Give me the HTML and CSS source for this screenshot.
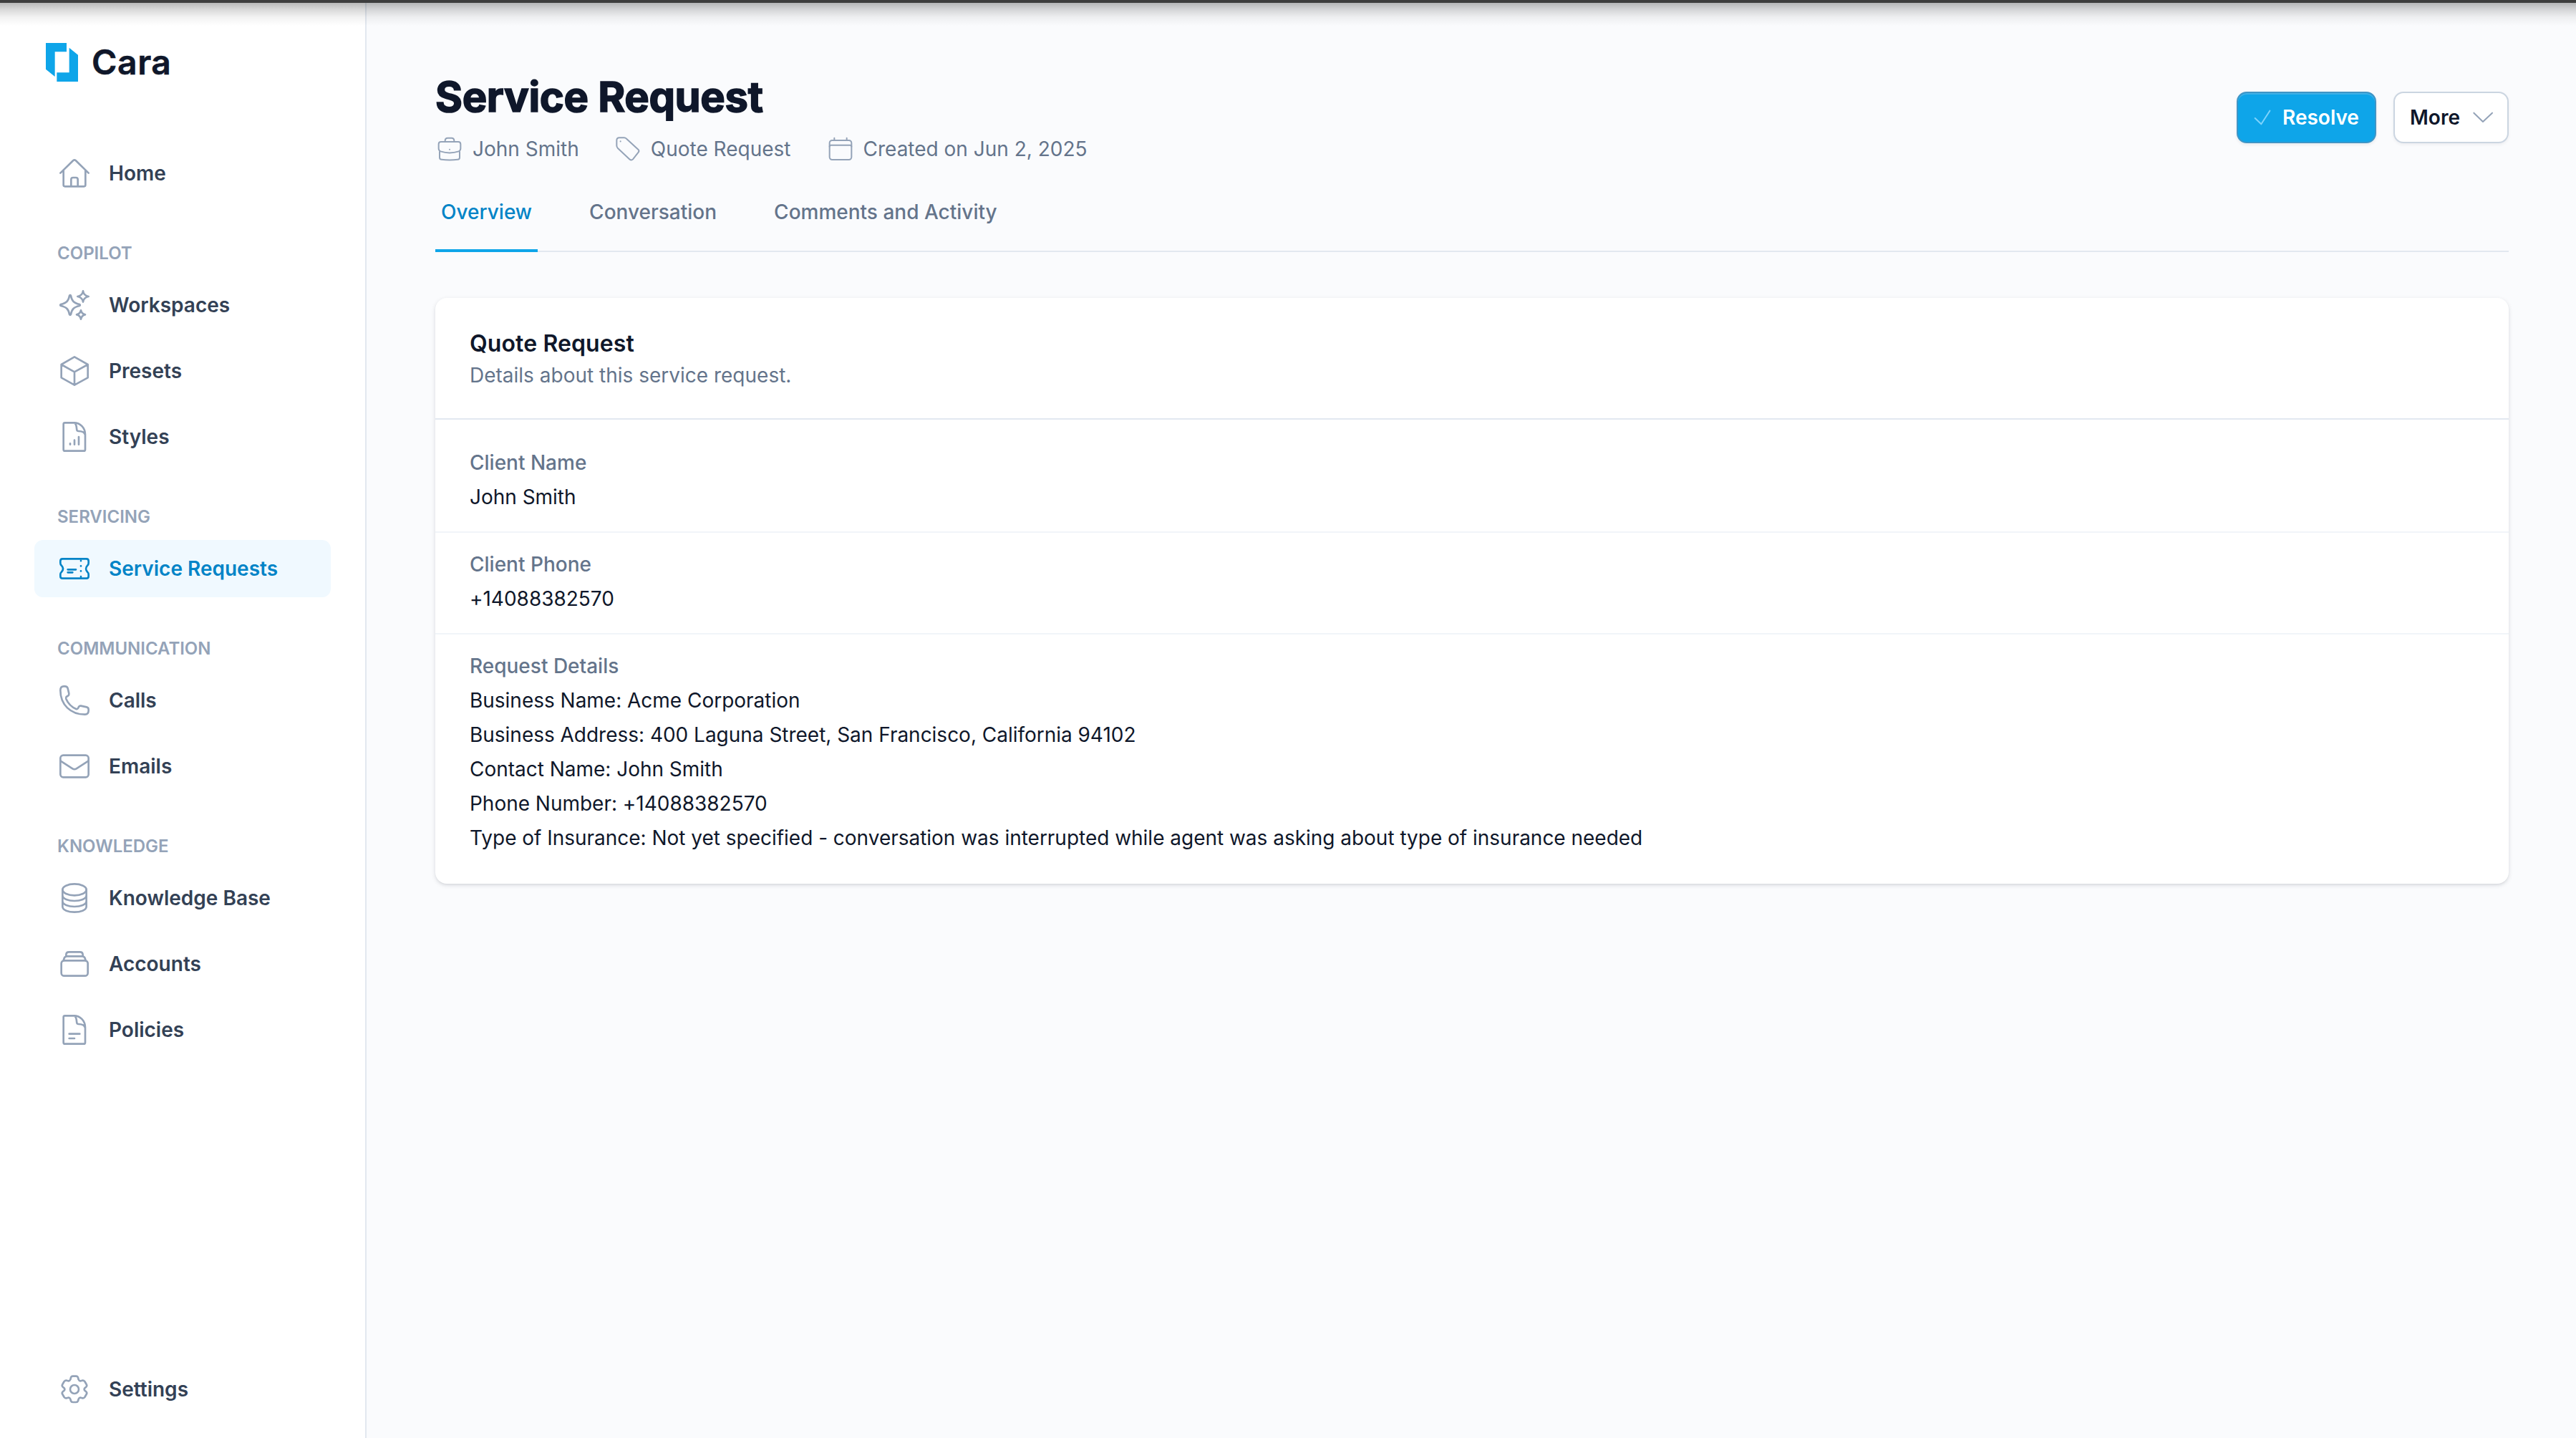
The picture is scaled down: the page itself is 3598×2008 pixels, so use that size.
FILE: index.html
```html
<!DOCTYPE html>
<html lang="en">
<head>
<meta charset="utf-8">
<title>Service Request</title>
<link rel="stylesheet" href="styles.css">
</head>
<body>
<div class="app">
  <div class="window-edge"></div>
  <aside class="sidebar">
    <div class="brand">
      <svg class="brand-mark" viewBox="0 0 135 162"><path d="M0 0H87V37H38V141L0 110Z"/><path d="M98 20L135 50V162H46V124H98Z"/></svg>
      <span class="brand-name">Cara</span>
    </div>
    <nav class="nav">
      <a class="nav-item"><svg class="icon" viewBox="0 0 144 144"><path d="M13 71L67 18Q72 14 77 18L131 71M26 60V121Q26 127 32 127H112Q118 127 118 121V60M58 126V98Q58 90 66 90H78Q86 90 86 98V126"/></svg><span>Home</span></a>

      <div class="nav-label">COPILOT</div>
      <a class="nav-item"><svg class="icon" viewBox="0 0 144 144"><path d="M51 33Q54 28 57 33C61 55 69 63 93 69Q98 72 93 75C69 81 61 89 57 111Q54 116 51 111C47 89 39 81 15 75Q10 72 15 69C39 63 47 55 51 33ZM108 13C110 27 116 33 131 36C116 39 110 45 108 59C106 45 100 39 85 36C100 33 106 27 108 13ZM99 94C101 105 106 110 117 112C106 114 101 120 99 131C97 120 92 114 81 112C92 110 97 105 99 94Z"/></svg><span>Workspaces</span></a>
      <a class="nav-item"><svg class="icon" viewBox="0 0 144 144"><path d="M72 13L128 45V100L72 131L17 100V45ZM17 45L72 76L128 45M72 76V131"/></svg><span>Presets</span></a>
      <a class="nav-item"><svg class="icon" viewBox="0 0 144 144"><path d="M26 19Q26 13 32 13H70C97 13 117 35 117 62V125Q117 131 111 131H32Q26 131 26 125ZM72 13C82 20 80 34 82 43Q83 48 88 48C101 48 114 51 117 64M54 100V104M72 86V104M90 72V104"/></svg><span>Styles</span></a>

      <div class="nav-label">SERVICING</div>
      <a class="nav-item active"><svg class="icon" viewBox="0 0 144 144"><path d="M13 40Q13 31 22 31H122Q131 31 131 40V49Q131 55 127 58C118 67 118 78 127 87Q131 90 131 96V104Q131 113 122 113H22Q13 113 13 104V96Q13 90 17 87C26 78 26 67 17 58Q13 55 13 49ZM44 76H78M44 88H64M99 39V39.5M99 61V61.5M99 82V82.5M99 105V105.5"/></svg><span>Service Requests</span></a>

      <div class="nav-label">COMMUNICATION</div>
      <a class="nav-item"><svg class="icon" viewBox="0 0 144 144"><path d="M13 30Q13 13 27 13H32Q42 13 44 22L49 43Q50 49 45 53L38 57Q35 61 37 66C44 82 60 100 79 108Q83 110 87 105L90 99Q93 94 99 95L123 100Q131 102 131 110V115Q131 131 116 131C56 131 13 90 13 30Z"/></svg><span>Calls</span></a>
      <a class="nav-item"><svg class="icon" viewBox="0 0 144 144"><rect x="13" y="26" width="118" height="92" rx="12"/><path d="M13 49L64 82Q72 87 80 82L131 49"/></svg><span>Emails</span></a>

      <div class="nav-label">KNOWLEDGE</div>
      <a class="nav-item"><svg class="icon" viewBox="0 0 144 144"><ellipse cx="72" cy="37" rx="50" ry="24"/><path d="M22 37V107C22 139 122 139 122 107V37M22 60C22 92 122 92 122 60M22 84C22 116 122 116 122 84"/></svg><span>Knowledge Base</span></a>
      <a class="nav-item"><svg class="icon" viewBox="0 0 144 144"><rect x="17" y="58" width="111" height="64" rx="12"/><path d="M26 58L29 48Q32 40 40 40H105Q113 40 116 48L119 58M37 40V34Q37 22 49 22H95Q107 22 107 34V40"/></svg><span>Accounts</span></a>
      <a class="nav-item"><svg class="icon" viewBox="0 0 144 144"><path d="M26 19Q26 13 32 13H70C97 13 117 35 117 62V125Q117 131 111 131H32Q26 131 26 125ZM72 13C82 20 80 34 82 43Q83 48 88 48C101 48 114 51 117 64M50 89H94M50 108H72"/></svg><span>Policies</span></a>

      <a class="nav-item settings"><svg class="icon" viewBox="0 0 144 144"><circle cx="72" cy="72" r="18"/><path d="M65 17H79Q85 17 87 23L89 31Q92 38 98 37L105 35Q111 34 115 39L122 51Q126 57 121 62L115 67Q111 72 115 77L121 82Q126 87 122 93L115 105Q111 110 105 109L98 107Q92 106 89 113L87 121Q85 126 79 126H65Q59 126 57 121L55 113Q52 106 46 107L39 109Q33 110 29 105L22 93Q18 87 23 82L29 77Q33 72 29 67L23 62Q18 57 22 51L29 39Q33 34 39 35L46 37Q52 38 55 31L57 23Q59 17 65 17Z"/></svg><span>Settings</span></a>
    </nav>
  </aside>

  <main class="main">
    <header class="page-header">
      <div class="heading">
        <h1 class="title">Service Request</h1>
        <div class="meta">
          <div class="meta-item"><svg class="meta-icon" viewBox="0 0 120 120"><path d="M14 40Q14 30 24 30H96Q106 30 106 40V58Q106 67 98 70C74 78 46 78 22 70Q14 67 14 58ZM18 72V96Q18 104 26 104C48 107 72 107 94 104Q102 104 102 96V72M41 29V26Q41 14 52 14H68Q79 14 79 26V29M60 62V62.5"/></svg><span>John Smith</span></div>
          <div class="meta-item"><svg class="meta-icon" viewBox="0 0 120 120"><path d="M13 24Q13 13 24 13H44Q50 13 54 17L103 62Q109 68 104 74L81 103Q75 109 68 104L17 56Q13 52 13 46ZM29 28V28.5"/></svg><span>Quote Request</span></div>
          <div class="meta-item"><svg class="meta-icon" viewBox="0 0 120 120"><rect x="14" y="24" width="92" height="81" rx="11"/><path d="M14 50Q14 44 20 44H100Q106 44 106 50M34 14V24M86 14V24"/></svg><span>Created on Jun 2, 2025</span></div>
        </div>
      </div>
      <div class="actions">
        <button class="btn btn-primary"><svg class="check" viewBox="0 0 72 72"><path d="M5 39L31 64L67 8"/></svg><span>Resolve</span></button>
        <button class="btn btn-secondary"><span>More</span><svg class="chevron" viewBox="0 0 96 96"><path d="M10 29L48 66L87 29"/></svg></button>
      </div>
    </header>

    <div class="tabs">
      <a class="tab current">Overview</a>
      <a class="tab">Conversation</a>
      <a class="tab">Comments and Activity</a>
    </div>

    <section class="card">
      <div class="card-header">
        <h2 class="card-title">Quote Request</h2>
        <p class="card-subtitle">Details about this service request.</p>
      </div>
      <dl class="details">
        <div class="detail"><dt>Client Name</dt><dd>John Smith</dd></div>
        <div class="detail"><dt>Client Phone</dt><dd>+14088382570</dd></div>
        <div class="detail">
          <dt>Request Details</dt>
          <dd>Business Name: Acme Corporation</dd>
          <dd>Business Address: 400 Laguna Street, San Francisco, California 94102</dd>
          <dd>Contact Name: John Smith</dd>
          <dd>Phone Number: +14088382570</dd>
          <dd>Type of Insurance: Not yet specified - conversation was interrupted while agent was asking about type of insurance needed</dd>
        </div>
      </dl>
    </section>
  </main>
</div>
</body>
</html>
```
FILE: styles.css
```css
* { box-sizing: border-box; margin: 0; padding: 0; }
body { font-family: Inter, "Liberation Sans", sans-serif; font-size: 28px; color: #0f172a; background: #fafbfd; }
svg { display: block; flex: none; fill: none; stroke: currentColor; stroke-linecap: round; stroke-linejoin: round; }

.app { display: flex; height: 2008px; position: relative; overflow: hidden; }
.window-edge { position: absolute; inset: 0 0 auto 0; height: 36px; border-top: 4px solid #3d3d3d; background: linear-gradient(rgba(0,0,0,.28), rgba(0,0,0,.15) 30%, rgba(0,0,0,.05) 62%, transparent); }

.sidebar { width: 512px; flex: none; display: flex; flex-direction: column; padding: 56px 48px 28px; background: #fff; border-right: 2px solid #e2e8f0; }
.brand { display: flex; align-items: center; gap: 19px; height: 62px; padding-left: 16px; margin-bottom: 84px; }
.brand-mark { width: 45px; height: 54px; fill: #0ea5e9; stroke: none; }
.brand-name { font-size: 48px; font-weight: 600; line-height: 62px; letter-spacing: .6px; -webkit-text-stroke: .6px; }
.nav { flex: 1; display: flex; flex-direction: column; }
.nav-item { display: flex; align-items: center; gap: 24px; height: 80px; padding: 0 32px; border-radius: 12px; font-weight: 600; color: #334155; }
.nav-item + .nav-item { margin-top: 12px; }
.icon { width: 48px; height: 48px; color: #94a3b8; stroke-width: 8; }
.nav-item.active, .nav-item.active .icon { color: #0284c7; }
.nav-item.active { width: 414px; background: #f0f9ff; }
.nav-label { margin: 57px 0 17px; padding-left: 32px; height: 30px; line-height: 30px; font-size: 24px; font-weight: 600; color: #94a3b8; }
.nav .settings { margin-top: auto; }

.main { flex: 1; padding: 98px 94px 0 96px; }
.page-header { display: flex; justify-content: space-between; }
.title { font-size: 58px; font-weight: 700; line-height: 74px; letter-spacing: -.35px; -webkit-text-stroke: 1.6px; }
.meta { display: flex; gap: 48px; margin-top: 16px; }
.meta-item { display: flex; align-items: center; gap: 12px; height: 40px; color: #64748b; }
.meta-item:last-child { margin-left: 1px; }
.meta-icon { width: 40px; height: 40px; color: #94a3b8; stroke-width: 6; }
.actions { display: flex; gap: 24px; margin-top: 30px; }
.btn { display: flex; align-items: center; height: 72px; border: 2px solid; border-radius: 14px; font: 600 28px/44px Inter, "Liberation Sans", sans-serif; }
.btn-primary { gap: 16px; width: 195px; padding-left: 22px; color: #fff; background: #0ea5e9; border-color: #3f95c6; box-shadow: inset 0 2px #3fb0e6, 0 2px 4px rgba(15,23,42,.08); }
.btn-secondary { justify-content: space-between; width: 161px; padding: 0 18px 0 21px; color: #0f172a; background: #fff; border-color: #cbd5e1; box-shadow: 0 2px 4px rgba(15,23,42,.06); }
.check { width: 24px; height: 24px; color: #7dd3fc; stroke-width: 6; }
.chevron { width: 32px; height: 32px; color: #94a3b8; stroke-width: 6; }

.tabs { display: flex; gap: 64px; height: 84px; margin: 40px 0 64px; box-shadow: inset 0 -2px #e2e8f0; }
.tab { height: 84px; padding: 8px 8px 0; line-height: 40px; font-weight: 500; color: #64748b; }
.tab.current { color: #0284c7; border-bottom: 4px solid #0ea5e9; }

.card { height: 818px; background: #fff; border-radius: 16px; box-shadow: 0 2px 6px rgba(15,23,42,.12), 0 2px 4px -2px rgba(15,23,42,.12); }
.card-header { padding: 40px 48px; height: 170px; border-bottom: 2px solid #e2e8f0; }
.card-title { font-size: 32px; font-weight: 600; line-height: 48px; letter-spacing: .1px; }
.card-subtitle { line-height: 40px; color: #64748b; }
.details { padding: 16px 0; line-height: 48px; }
.detail { padding: 20px 48px 24px; }
.detail + .detail { border-top: 2px solid #f1f5f9; }
.detail dt { font-weight: 500; color: #64748b; }
.detail dd { letter-spacing: -.02px; }
```
